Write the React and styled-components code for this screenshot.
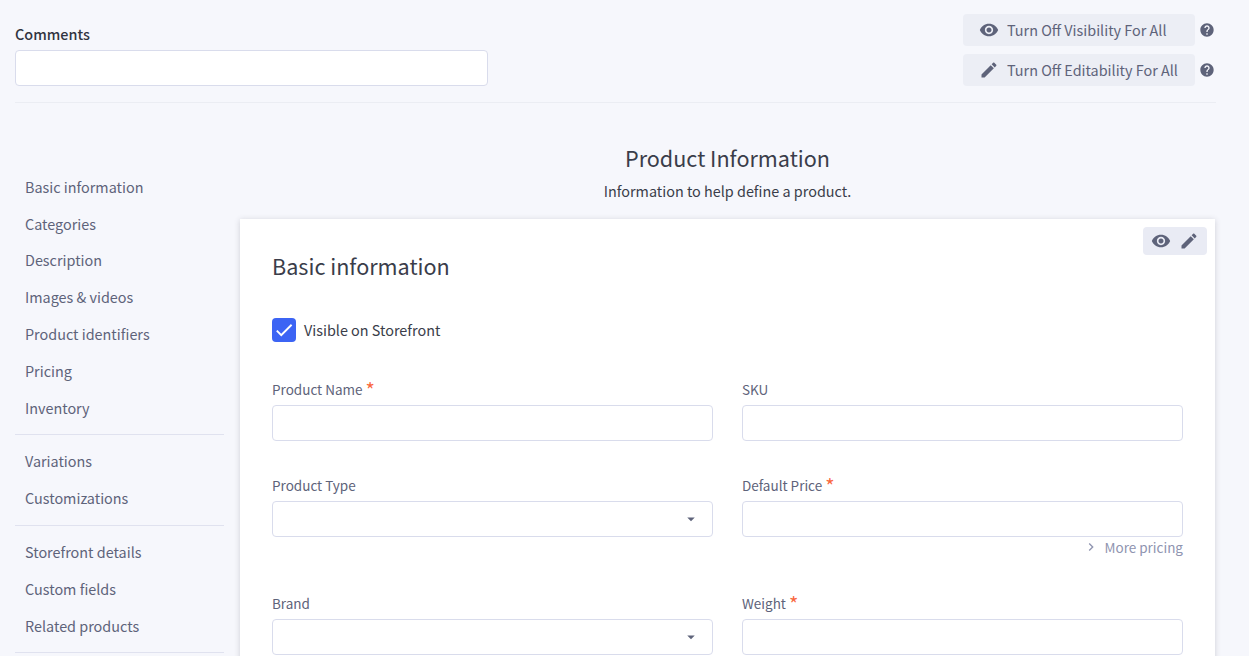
import styled, { createGlobalStyle } from 'styled-components';

const GlobalStyle = createGlobalStyle`
  html, body {
    margin: 0;
    height: 656px;
    overflow: hidden;
    background: #f6f7fc;
    color: #3a3d4a;
    font-family: "Noto Sans CJK SC", "Noto Sans", sans-serif;
    font-size: 14.4px;
  }
`;

const Page = styled.div`
  width: 1201px;
  height: 656px;
  padding: 0 33px 0 15px;
  overflow: hidden;
`;

const TopBar = styled.div`
  display: flex;
  justify-content: space-between;
  height: 102px;
  border-bottom: 1px solid #ebedf3;
`;

const CommentsGroup = styled.div`
  width: 473px;
  padding-top: 24px;
`;

const CommentsLabel = styled.div`
  font-weight: 500;
  line-height: 20px;
  margin-bottom: 6px;
  color: #313440;
`;

const CommentsInput = styled.input`
  display: block;
  box-sizing: border-box;
  width: 100%;
  height: 36px;
  background: #fff;
  border: 1px solid #d9dcec;
  border-radius: 4px;
`;

const ToggleList = styled.div`
  display: flex;
  flex-direction: column;
  gap: 8px;
  padding: 14px 1px 0 0;
`;

const ToggleRow = styled.div`
  display: flex;
  align-items: center;
  gap: 4px;
`;

const ToggleButton = styled.button`
  display: flex;
  align-items: center;
  gap: 8px;
  width: 232px;
  height: 32px;
  padding: 0 0 0 16px;
  background: #eceef5;
  border: 0;
  border-radius: 4px;
  color: #5e637a;
  font: inherit;
  line-height: 20px;
  white-space: nowrap;
`;

const Icon = styled.svg`
  display: block;
  flex: none;
  width: ${(props) => props.$size || 24}px;
  height: ${(props) => props.$size || 24}px;
  fill: ${(props) => props.$color || '#5e637a'};
`;

const Body = styled.div`
  display: grid;
  grid-template-columns: 209px 975px;
  column-gap: 16px;
`;

const Sidebar = styled.nav`
  padding-top: 65.9px;
`;

const NavItem = styled.div`
  height: 36.8px;
  padding-left: 10px;
  line-height: 36.8px;
  color: #5e637a;
`;

const NavDivider = styled.div`
  height: 1px;
  margin: 7.6px 0 8.4px;
  background: #e0e2ef;
`;

const Main = styled.main`
  min-width: 0;
`;

const Heading = styled.div`
  padding-top: 40px;
  height: 76px;
  text-align: center;
`;

const HeadingTitle = styled.h1`
  margin: 0;
  font-size: 21.6px;
  font-weight: 400;
  line-height: 30px;
  color: #3a3d4a;
`;

const HeadingText = styled.p`
  margin: 6px 0 0;
  line-height: 24px;
`;

const Card = styled.section`
  position: relative;
  box-sizing: border-box;
  height: 600px;
  padding: 32px;
  background: #fff;
  box-shadow: 0 1px 6px rgba(49, 52, 64, 0.2);
`;

const CardActions = styled.div`
  position: absolute;
  top: 8px;
  right: 8px;
  display: flex;
  align-items: center;
  gap: 8px;
  box-sizing: border-box;
  height: 28px;
  padding: 0 8px;
  background: #e9ebf4;
  border-radius: 4px;
`;

const CardTitle = styled.h2`
  margin: 0;
  font-size: 21.6px;
  font-weight: 400;
  line-height: 30px;
  color: #3a3d4a;
`;

const CheckRow = styled.div`
  display: flex;
  align-items: center;
  gap: 8px;
  margin: 37px 0 39px;
  line-height: 24px;
`;

const CheckBox = styled.span`
  display: flex;
  align-items: center;
  justify-content: center;
  width: 24px;
  height: 24px;
  background: #3c64f4;
  border-radius: 4px;
`;

const FieldGrid = styled.div`
  display: grid;
  grid-template-columns: 441px 441px;
  column-gap: 29px;
`;

const Field = styled.div`
  height: ${(props) => props.$height || 96}px;
`;

const FieldLabel = styled.label`
  display: block;
  height: 24px;
  font-size: 13.5px;
  line-height: 16px;
  color: #5e637a;
`;

const Required = styled.span`
  position: relative;
  top: 3px;
  margin-left: 3px;
  font-size: 20px;
  line-height: 0;
  color: #f9683f;
`;

const SelectBox = styled.div`
  display: flex;
  align-items: center;
  justify-content: flex-end;
  box-sizing: border-box;
  height: 36px;
  padding-right: 12px;
  border: 1px solid #d9dcec;
  border-radius: 4px;
  background: #fff;
`;

const TextBox = styled(SelectBox)`
  padding-right: 0;
`;

const MoreLink = styled.div`
  display: flex;
  align-items: center;
  justify-content: flex-end;
  gap: 5px;
  margin-top: 1px;
  font-size: 13.5px;
  line-height: 18px;
  color: #8f94b0;
`;

const eye = 'M12 4.5C7 4.5 2.73 7.61 1 12c1.73 4.39 6 7.5 11 7.5s9.27-3.11 11-7.5c-1.73-4.39-6-7.5-11-7.5zM12 17c-2.76 0-5-2.24-5-5s2.24-5 5-5 5 2.24 5 5-2.24 5-5 5zm0-8c-1.66 0-3 1.34-3 3s1.34 3 3 3 3-1.34 3-3-1.34-3-3-3z';
const pencil = 'M3 17.25V21h3.75L17.81 9.94l-3.75-3.75L3 17.25zM20.71 7.04c.39-.39.39-1.02 0-1.41l-2.34-2.34c-.39-.39-1.02-.39-1.41 0l-1.83 1.83 3.75 3.75 1.83-1.83z';
const help = 'M12 2C6.48 2 2 6.48 2 12s4.48 10 10 10 10-4.48 10-10S17.52 2 12 2zm1 17h-2v-2h2v2zm2.07-7.75l-.9.92C13.45 12.9 13 13.5 13 15h-2v-.5c0-1.1.45-2.1 1.17-2.83l1.24-1.26c.37-.36.59-.86.59-1.41 0-1.1-.9-2-2-2s-2 .9-2 2H8c0-2.21 1.79-4 4-4s4 1.79 4 4c0 .88-.36 1.68-.93 2.25z';
const caret = 'M7 10l5 5 5-5z';
const chevron = 'M10 6L8.59 7.41 13.17 12l-4.58 4.59L10 18l6-6z';
const check = 'M9 16.17L4.83 12l-1.42 1.41L9 19 21 7l-1.41-1.41z';

const navGroups = [
  ['Basic information', 'Categories', 'Description', 'Images & videos', 'Product identifiers', 'Pricing', 'Inventory'],
  ['Variations', 'Customizations'],
  ['Storefront details', 'Custom fields', 'Related products'],
];

function Glyph({ d, size, color }) {
  return (
    <Icon viewBox="0 0 24 24" $size={size} $color={color}>
      <path d={d} />
    </Icon>
  );
}

function Toggle({ icon, children }) {
  return (
    <ToggleRow>
      <ToggleButton>
        <Glyph d={icon} size={20} />
        {children}
      </ToggleButton>
      <Glyph d={help} size={16} />
    </ToggleRow>
  );
}

function App() {
  return (
    <Page>
      <GlobalStyle />
      <TopBar>
        <CommentsGroup>
          <CommentsLabel>Comments</CommentsLabel>
          <CommentsInput />
        </CommentsGroup>
        <ToggleList>
          <Toggle icon={eye}>Turn Off Visibility For All</Toggle>
          <Toggle icon={pencil}>Turn Off Editability For All</Toggle>
        </ToggleList>
      </TopBar>
      <Body>
        <Sidebar>
          {navGroups.map((group) => (
            <div key={group[0]}>
              {group.map((item) => (
                <NavItem key={item}>{item}</NavItem>
              ))}
              <NavDivider />
            </div>
          ))}
        </Sidebar>
        <Main>
          <Heading>
            <HeadingTitle>Product Information</HeadingTitle>
            <HeadingText>Information to help define a product.</HeadingText>
          </Heading>
          <Card>
            <CardActions>
              <Glyph d={eye} size={20} />
              <Glyph d={pencil} size={20} />
            </CardActions>
            <CardTitle>Basic information</CardTitle>
            <CheckRow>
              <CheckBox>
                <Glyph d={check} size={22} color="#fff" />
              </CheckBox>
              Visible on Storefront
            </CheckRow>
            <FieldGrid>
              <Field>
                <FieldLabel>Product Name<Required>*</Required></FieldLabel>
                <TextBox />
              </Field>
              <Field>
                <FieldLabel>SKU</FieldLabel>
                <TextBox />
              </Field>
              <Field $height={118}>
                <FieldLabel>Product Type</FieldLabel>
                <SelectBox>
                  <Glyph d={caret} size={18} />
                </SelectBox>
              </Field>
              <Field $height={118}>
                <FieldLabel>Default Price<Required>*</Required></FieldLabel>
                <TextBox />
                <MoreLink>
                  <Glyph d={chevron} size={16} color="#8f94b0" />
                  More pricing
                </MoreLink>
              </Field>
              <Field>
                <FieldLabel>Brand</FieldLabel>
                <SelectBox>
                  <Glyph d={caret} size={18} />
                </SelectBox>
              </Field>
              <Field>
                <FieldLabel>Weight<Required>*</Required></FieldLabel>
                <TextBox />
              </Field>
            </FieldGrid>
          </Card>
        </Main>
      </Body>
    </Page>
  );
}

export default App;
